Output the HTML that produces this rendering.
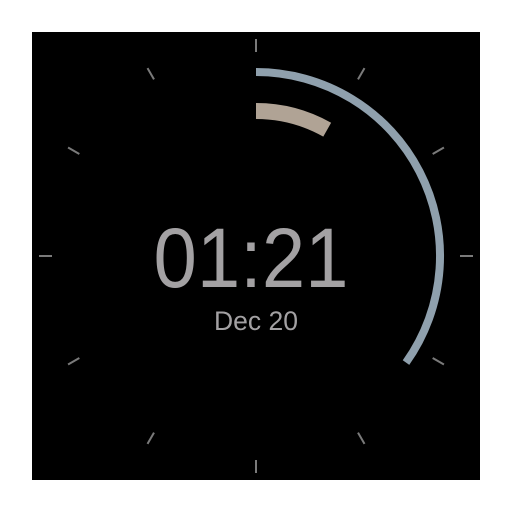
<!DOCTYPE html>
<html><head><style>
html,body{margin:0;padding:0;background:#fff;width:512px;height:512px;overflow:hidden}
svg{position:absolute;left:0;top:0}
</style></head><body>
<svg width="512" height="512" viewBox="0 0 512 512">
<rect x="32" y="32" width="448" height="448" fill="#000"/>
<g stroke="#7a7a7a" stroke-width="2">
<line x1="256" y1="39" x2="256" y2="52" transform="rotate(0 256 256)"/>
<line x1="256" y1="39" x2="256" y2="52" transform="rotate(30 256 256)"/>
<line x1="256" y1="39" x2="256" y2="52" transform="rotate(60 256 256)"/>
<line x1="256" y1="39" x2="256" y2="52" transform="rotate(90 256 256)"/>
<line x1="256" y1="39" x2="256" y2="52" transform="rotate(120 256 256)"/>
<line x1="256" y1="39" x2="256" y2="52" transform="rotate(150 256 256)"/>
<line x1="256" y1="39" x2="256" y2="52" transform="rotate(180 256 256)"/>
<line x1="256" y1="39" x2="256" y2="52" transform="rotate(210 256 256)"/>
<line x1="256" y1="39" x2="256" y2="52" transform="rotate(240 256 256)"/>
<line x1="256" y1="39" x2="256" y2="52" transform="rotate(270 256 256)"/>
<line x1="256" y1="39" x2="256" y2="52" transform="rotate(300 256 256)"/>
<line x1="256" y1="39" x2="256" y2="52" transform="rotate(330 256 256)"/>
</g>
<path d="M256 72 A184 184 0 0 1 406 362.6" fill="none" stroke="#8fa0ad" stroke-width="8"/>
<path d="M256 111 A145 145 0 0 1 327.2 129.7" fill="none" stroke="#b0a395" stroke-width="16"/>
<text x="251" y="287" text-anchor="middle" font-family="Liberation Sans, sans-serif" font-size="84" fill="#a3a1a3" textLength="195" lengthAdjust="spacingAndGlyphs">01:21</text>
<text x="256" y="330" text-anchor="middle" font-family="Liberation Sans, sans-serif" font-size="27" fill="#a3a1a3" textLength="84" lengthAdjust="spacingAndGlyphs">Dec 20</text>
</svg>
</body></html>
